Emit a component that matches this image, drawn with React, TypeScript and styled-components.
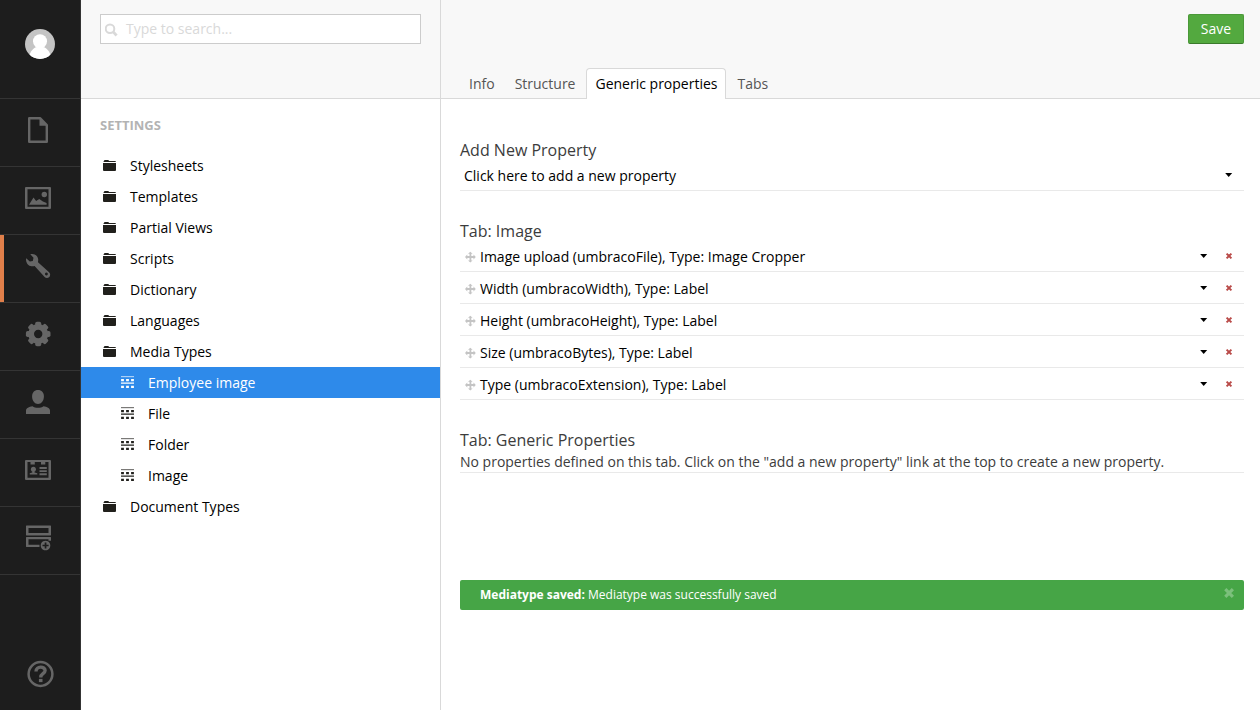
import React from "react";
import styled, { createGlobalStyle } from "styled-components";

const GlobalStyle = createGlobalStyle`
  * { box-sizing: border-box; }
  body {
    margin: 0;
    background: #fff;
    font-family: "Open Sans", sans-serif;
    font-size: 14px;
    line-height: 20px;
    color: #000;
  }
`;

const Shell = styled.div`
  display: flex;
  width: 1260px;
  height: 710px;
  overflow: hidden;
`;

const Rail = styled.nav`
  display: flex;
  flex-direction: column;
  width: 81px;
  background: #1d1d1d;
  border-right: 1px solid #343434;
`;

const AvatarCell = styled.div`
  height: 99px;
  padding: 29px 0 0 25px;
  border-bottom: 1px solid #343434;
  svg { display: block; }
`;

const RailItem = styled.a<{ $active?: boolean }>`
  display: block;
  height: 68px;
  padding: 15px 0 0 22px;
  box-shadow: ${(p) => (p.$active ? "inset 4px 0 0 #e07f4a" : "none")};
  border-bottom: 1px solid #343434;
  color: #666;
  svg { display: block; }
`;

const HelpCell = styled.div`
  margin-top: auto;
  padding: 0 0 22px 26px;
  color: #666;
  svg { display: block; }
`;

const Sidebar = styled.aside`
  display: flex;
  flex-direction: column;
  width: 360px;
  border-right: 1px solid #d9d9d9;
`;

const SidebarHeader = styled.div`
  height: 99px;
  padding: 14px 19px 0;
  background: #f8f8f8;
  border-bottom: 1px solid #d9d9d9;
`;

const SearchBox = styled.div`
  display: flex;
  align-items: center;
  gap: 8px;
  height: 30px;
  width: 321px;
  padding-left: 4px;
  background: #fff;
  border: 1px solid #ccc;
  color: #d9d9d9;
  svg { margin-top: 2px; }
`;

const TreeTitle = styled.h5`
  margin: 16px 0 15px 19px;
  font-size: 13px;
  line-height: 20px;
  font-weight: 700;
  color: #b3b3b3;
`;

const TreeRow = styled.div<{ $depth: number; $selected?: boolean }>`
  display: flex;
  align-items: center;
  gap: 11px;
  height: 31px;
  padding-left: ${(p) => 20 + p.$depth * 18}px;
  background: ${(p) => (p.$selected ? "#2e8aea" : "transparent")};
  color: ${(p) => (p.$selected ? "#fff" : "#000")};
  svg { color: ${(p) => (p.$selected ? "#fff" : "#21201c")}; }
`;

const Main = styled.main`
  flex: 1;
  display: flex;
  flex-direction: column;
`;

const MainHeader = styled.header`
  display: flex;
  flex-direction: column;
  justify-content: space-between;
  height: 99px;
  padding-top: 14px;
  background: #f8f8f8;
  box-shadow: inset 0 -1px 0 #d9d9d9;
`;

const SaveButton = styled.button`
  align-self: flex-end;
  width: 56px;
  height: 30px;
  margin-right: 16px;
  padding: 0;
  font: inherit;
  color: #fff;
  background: #53a93f;
  border: 1px solid #4b9939;
  border-bottom-color: #3a7a2c;
  border-radius: 2px;
`;

const TabBar = styled.div`
  display: flex;
  padding-left: 19px;
`;

const Tab = styled.a<{ $active?: boolean }>`
  height: 31px;
  padding: 5px ${(p) => (p.$active ? 7 : 8)}px 0 8px;
  margin-right: ${(p) => (p.$active ? 3 : 2)}px;
  border: 1px solid ${(p) => (p.$active ? "#d9d9d9" : "transparent")};
  border-bottom: 0;
  border-radius: 4px 4px 0 0;
  background: ${(p) => (p.$active ? "#fff" : "transparent")};
  color: ${(p) => (p.$active ? "#000" : "#555")};
`;

const Content = styled.div`
  padding: 41px 16px 0 19px;
`;

const Section = styled.section<{ $gap: number }>`
  margin-bottom: ${(p) => p.$gap}px;
`;

const Heading = styled.h2`
  margin: 0;
  font-size: 16px;
  line-height: 20px;
  font-weight: 400;
  color: #3c3c3c;
`;

const AddRow = styled.div`
  display: flex;
  align-items: center;
  justify-content: space-between;
  height: 31px;
  padding: 2px 11px 0 4px;
  border-bottom: 1px solid #e9e9e9;
`;

const PropertyRow = styled.div`
  display: flex;
  align-items: center;
  height: 32px;
  padding: 3px 11px 0 5px;
  border-bottom: 1px solid #e9e9e9;
  &:first-of-type { height: 31px; padding-top: 2px; }
`;

const PropertyName = styled.span`
  flex: 1;
  margin-left: 4px;
`;

const Actions = styled.span`
  display: flex;
  align-items: center;
  gap: 17px;
  padding-bottom: 2px;
`;

const EmptyNote = styled.p`
  margin: 0;
  height: 23px;
  line-height: 24px;
  border-bottom: 1px solid #e9e9e9;
  color: #3c3c3c;
`;

const Alert = styled.div`
  display: flex;
  justify-content: space-between;
  height: 30px;
  padding: 5px 10px 0 20px;
  font-size: 12px;
  line-height: 20px;
  color: #fff;
  background: #46a546;
  border-radius: 2px;
`;

const FileIcon = () => (
  <svg width="32" height="32" viewBox="0 0 32 32" fill="none" stroke="currentColor" strokeWidth="2.4">
    <path d="M7.200 4.200H18l6.800 7v16.600H7.200z" strokeLinejoin="round" />
    <path d="M17.500 4v7.700h7.500z" fill="currentColor" stroke="none" />
  </svg>
);
const PictureIcon = () => (
  <svg width="32" height="32" viewBox="0 0 32 32" fill="currentColor">
    <path fillRule="evenodd" d="M4 5h24a1 1 0 0 1 1 1v20a1 1 0 0 1-1 1H4a1 1 0 0 1-1-1V6a1 1 0 0 1 1-1zM5.500 7.200v17.600h21V7.200z" />
    <circle cx="22.300" cy="12.500" r="2.700" />
    <path d="M7 22.800l4.500-7.300 2.600 3.600 3.200-2 3.600 2.400 3.700 1.600v1.700z" />
  </svg>
);
const WrenchIcon = () => (
  <svg width="32" height="32" viewBox="0 0 32 32" fill="currentColor">
    <path fillRule="evenodd" d="M8.300 4.300C12.400 3 16 6 16.200 9.400c0 1.400-.2 2-.2 2.900l11.100 9.900c1.500 1.400 1.300 3.500.2 4.700-1.300 1.400-3.500 1.300-4.700 0L12.600 15.900c-1 .4-2 .5-3 .4C6 15.900 3.300 12 4.200 8.200l3.600 3.300 3-.6.700-3.100zM24.400 22.600a1.400 1.400 0 1 0 .01 0z" />
  </svg>
);
const GearIcon = () => (
  <svg width="32" height="32" viewBox="0 0 32 32" fill="none" stroke="currentColor">
    <circle cx="16.200" cy="16" r="7.100" strokeWidth="5.800" />
    {[0, 45, 90, 135, 180, 225, 270, 315].map((a) => (
      <rect key={a} x="13.200" y="3.700" width="6" height="4.500" rx="1.800" fill="currentColor" stroke="none" transform={`rotate(${a} 16.200 16)`} />
    ))}
  </svg>
);
const UserIcon = () => (
  <svg width="32" height="32" viewBox="0 0 32 32" fill="currentColor">
    <path d="M16 4c3.700 0 5.900 2.600 5.900 6.500 0 4.200-2.600 7.500-5.900 7.500s-5.900-3.300-5.900-7.500C10.100 6.600 12.300 4 16 4z" />
    <path d="M4 28v-3.500c0-2.500 3-3.600 6.500-4.300 1.500 1 3.200 1.500 5.500 1.500s4-.5 5.500-1.500c3.500.7 6.500 1.800 6.500 4.300V28z" />
  </svg>
);
const CardIcon = () => (
  <svg width="32" height="32" viewBox="0 0 32 32" fill="currentColor">
    <path fillRule="evenodd" d="M4 6h24a1 1 0 0 1 1 1v18a1 1 0 0 1-1 1H4a1 1 0 0 1-1-1V7a1 1 0 0 1 1-1zM5.500 8v15.700h21V8h-3.200v2.600h-4.300V8h-6.200v2.600H8.500V8z" />
    <circle cx="11.400" cy="15.200" r="2.500" />
    <path d="M10.300 17h2.200v1.500l2.800.7V20.600H7.700v-1.400l2.600-.7zM17.500 13h7.300v2h-7.300zM17.500 16.300h7.300v1.800h-7.300zM17.500 19.300h7.300v2h-7.300z" />
  </svg>
);
const ServerIcon = () => (
  <svg width="32" height="32" viewBox="0 0 32 32" fill="currentColor">
    <path fillRule="evenodd" d="M4.400 3.500h24.200q.4 0 .4.400v9.200q0 .4-.4.400H4.400q-.4 0-.4-.4V3.900q0-.4.400-.4zM6.500 5.900v5.200h20V5.900zM4.400 15h24.200q.4 0 .4.400v3.400h-2.500v-1.500h-20V22.700H17.500V25H4.400q-.4 0-.4-.4v-9.200q0-.4.4-.4z" />
    <path fillRule="evenodd" d="M23.500 18.700a4.800 4.800 0 1 0 .01 0zM22.700 20.500h1.700v2.200h2.200v1.600h-2.200v2.200h-1.700v-2.200h-2.200v-1.600h2.200z" />
  </svg>
);
const HelpIcon = () => (
  <svg width="29" height="29" viewBox="0 0 29 29" fill="none" stroke="currentColor">
    <circle cx="14.500" cy="15" r="11.900" strokeWidth="2.500" />
    <path d="M10 12.400c0-5.700 9.100-5.400 9.100-.8 0 3-4.300 3.200-4.300 6.400v.5" strokeWidth="3.400" />
    <path d="M14.700 19.900v3.200" strokeWidth="3.600" />
  </svg>
);
const AvatarIcon = () => (
  <svg width="30" height="30" viewBox="0 0 30 30">
    <clipPath id="avatarClip"><circle cx="15" cy="15" r="15" /></clipPath>
    <g clipPath="url(#avatarClip)">
      <rect width="30" height="30" fill="#c4c4c4" />
      <circle cx="15" cy="12.300" r="7" fill="#fff" />
      <path d="M4 28c1-5.500 4.500-9.500 8-10h6c3.500.5 7 4.500 8 10v3H4z" fill="#fff" />
    </g>
  </svg>
);
const FolderIcon = () => (
  <svg width="18" height="31" viewBox="0 0 18 31" fill="currentColor">
    <path d="M2.600 12v-.8L3.600 10h3.600l1 1h6.300l.4 1zM2 13h13v7l-.5 1h-12L2 20z" />
  </svg>
);
const ListIcon = () => (
  <svg width="18" height="31" viewBox="0 0 18 31" fill="currentColor">
    <path d="M2 9h13v1.200H2z" opacity=".6" />
    <path d="M2.100 12h2.800v2.200H2.100zM7.100 12h2.800v2.200H7.100zM12.100 12h2.800v2.200h-2.800zM2 15.600h13v1.100H2zM2.100 18.700h2.800v2.300H2.100zM7.100 18.700h2.800v2.300H7.100zM12.100 18.700h2.800v2.300h-2.800z" />
  </svg>
);
const SearchIcon = () => (
  <svg width="13" height="14" viewBox="0 0 13 14" fill="none" stroke="currentColor">
    <circle cx="5" cy="5.700" r="4.300" strokeWidth="2" />
    <path d="M8.200 8.900l3.400 3.600" strokeWidth="2.800" />
  </svg>
);
const MoveIcon = () => (
  <svg width="11" height="12" viewBox="0 0 11 12" fill="#c4c4c4">
    <path d="M4.500 2.800H3L5.300.8l2.300 2H6.300v2.300h2.200V3.600l2.300 2.500-2.300 2.500V7.100H6.300v2.300h1.300l-2.300 2-2.300-2h1.500V7.100H2.300v1.500L0 6.100l2.300-2.500v1.500h2.200z" />
  </svg>
);
const CaretSvg = styled.svg`
  margin-bottom: 1px;
`;
const Caret = () => (
  <CaretSvg width="8" height="4" viewBox="0 0 8 4"><path d="M.2 0h7L3.700 4z" fill="#000" /></CaretSvg>
);
const DeleteIcon = () => (
  <svg width="8" height="8" viewBox="0 0 8 8" stroke="#b94a48" strokeWidth="2"><path d="M1.600 1.600l4.800 4.800M6.400 1.600l-4.800 4.800" /></svg>
);
const CloseIcon = () => (
  <svg width="10" height="16" viewBox="0 0 10 16" stroke="#7cc07c" strokeWidth="3.200"><path d="M1.300 4.200l7.600 7.600M8.900 4.200l-7.600 7.600" /></svg>
);

const railIcons = [FileIcon, PictureIcon, WrenchIcon, GearIcon, UserIcon, CardIcon, ServerIcon];

const tree = [
  { label: "Stylesheets", depth: 0 },
  { label: "Templates", depth: 0 },
  { label: "Partial Views", depth: 0 },
  { label: "Scripts", depth: 0 },
  { label: "Dictionary", depth: 0 },
  { label: "Languages", depth: 0 },
  { label: "Media Types", depth: 0 },
  { label: "Employee image", depth: 1, selected: true },
  { label: "File", depth: 1 },
  { label: "Folder", depth: 1 },
  { label: "Image", depth: 1 },
  { label: "Document Types", depth: 0 },
];

const tabs = ["Info", "Structure", "Generic properties", "Tabs"];

const properties = [
  "Image upload (umbracoFile), Type: Image Cropper",
  "Width (umbracoWidth), Type: Label",
  "Height (umbracoHeight), Type: Label",
  "Size (umbracoBytes), Type: Label",
  "Type (umbracoExtension), Type: Label",
];

export default function App() {
  return (
    <>
      <GlobalStyle />
      <Shell>
        <Rail>
          <AvatarCell><AvatarIcon /></AvatarCell>
          {railIcons.map((Icon, i) => (
            <RailItem key={i} $active={i === 2}><Icon /></RailItem>
          ))}
          <HelpCell><HelpIcon /></HelpCell>
        </Rail>
        <Sidebar>
          <SidebarHeader>
            <SearchBox><SearchIcon />Type to search...</SearchBox>
          </SidebarHeader>
          <TreeTitle>SETTINGS</TreeTitle>
          {tree.map((n) => (
            <TreeRow key={n.label} $depth={n.depth} $selected={n.selected}>
              {n.depth ? <ListIcon /> : <FolderIcon />}
              <span>{n.label}</span>
            </TreeRow>
          ))}
        </Sidebar>
        <Main>
          <MainHeader>
            <SaveButton>Save</SaveButton>
            <TabBar>
              {tabs.map((t) => (
                <Tab key={t} $active={t === "Generic properties"}>{t}</Tab>
              ))}
            </TabBar>
          </MainHeader>
          <Content>
            <Section $gap={30}>
              <Heading>Add New Property</Heading>
              <AddRow>
                <span>Click here to add a new property</span>
                <Actions><Caret /></Actions>
              </AddRow>
            </Section>
            <Section $gap={30}>
              <Heading>Tab: Image</Heading>
              {properties.map((p) => (
                <PropertyRow key={p}>
                  <MoveIcon />
                  <PropertyName>{p}</PropertyName>
                  <Actions><Caret /><DeleteIcon /></Actions>
                </PropertyRow>
              ))}
            </Section>
            <Section $gap={107}>
              <Heading>Tab: Generic Properties</Heading>
              <EmptyNote>No properties defined on this tab. Click on the "add a new property" link at the top to create a new property.</EmptyNote>
            </Section>
            <Alert>
              <span><b>Mediatype saved:</b> Mediatype was successfully saved</span>
              <CloseIcon />
            </Alert>
          </Content>
        </Main>
      </Shell>
    </>
  );
}
